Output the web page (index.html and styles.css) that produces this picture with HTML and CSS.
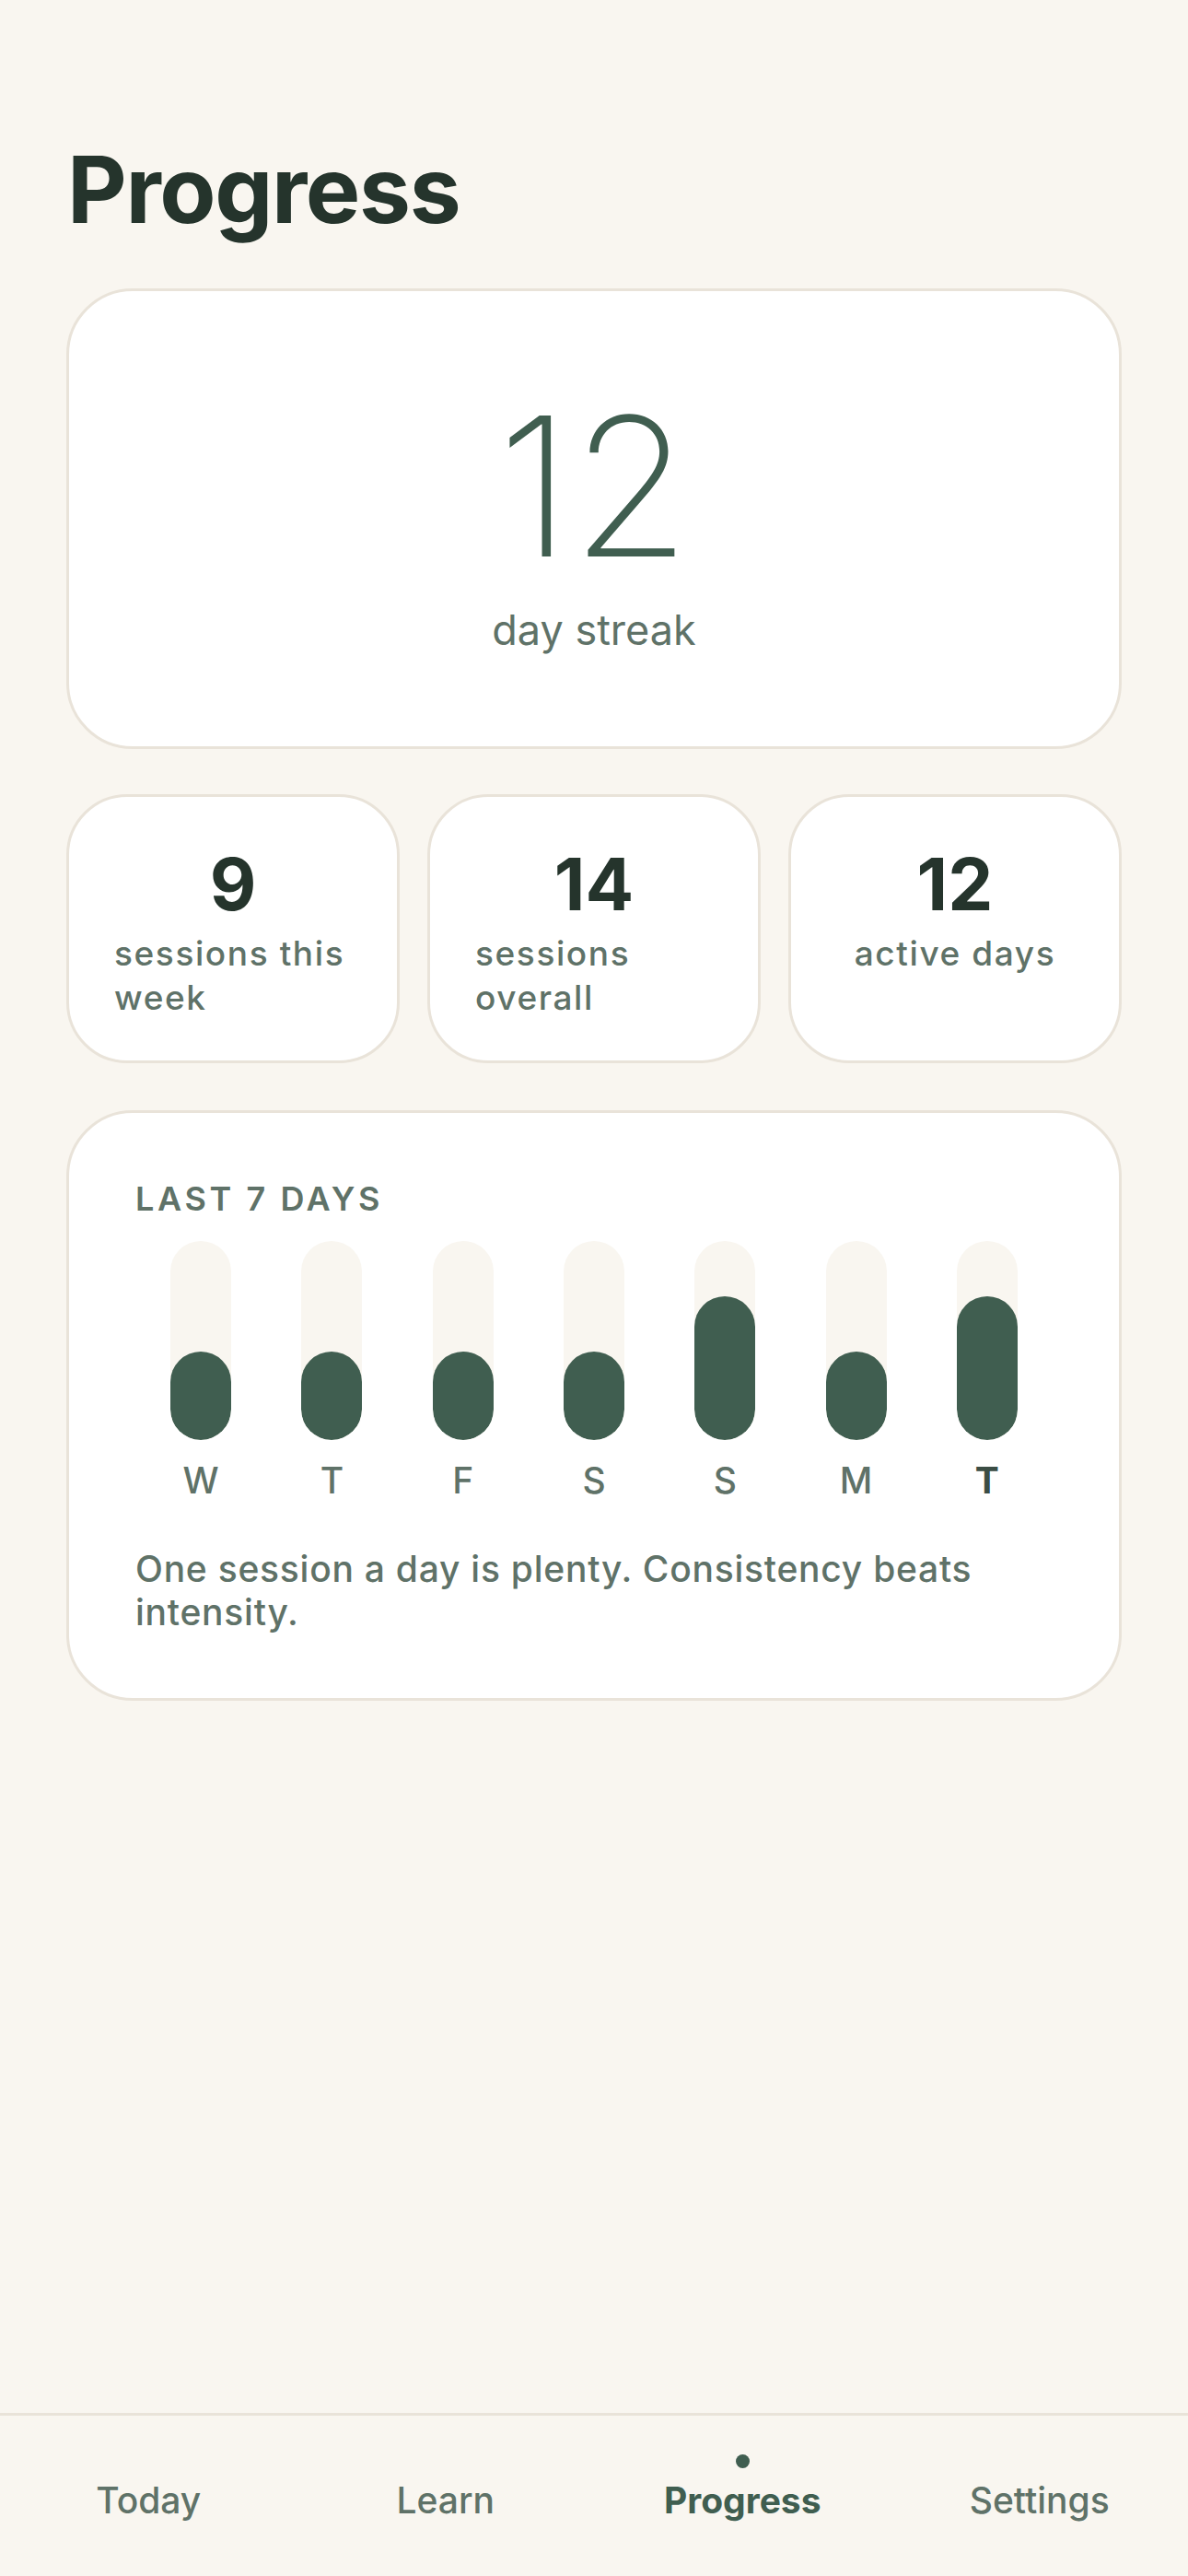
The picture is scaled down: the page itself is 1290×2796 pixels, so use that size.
FILE: index.html
```html
<!DOCTYPE html>
<html lang="en">
<head>
  <meta charset="UTF-8" />
  <meta name="viewport" content="width=device-width, initial-scale=1.0"/>
  <title>Progress</title>
  <link rel="stylesheet" href="styles.css">
</head>
<body>
  <div class="app">
    <main class="screen">
      <h1 class="title">Progress</h1>

      <section class="card streak">
        <div class="streak-num">12</div>
        <div class="streak-label">day streak</div>
      </section>

      <section class="stats">
        <div class="card stat">
          <div class="stat-num">9</div>
          <div class="stat-label">sessions this week</div>
        </div>
        <div class="card stat">
          <div class="stat-num">14</div>
          <div class="stat-label">sessions overall</div>
        </div>
        <div class="card stat">
          <div class="stat-num">12</div>
          <div class="stat-label">active days</div>
        </div>
      </section>

      <section class="card week">
        <div class="week-title">LAST 7 DAYS</div>
        <div class="bars">
          <div class="day">
            <div class="track"><div class="fill" style="height: 96px"></div></div>
            <span class="day-label">W</span>
          </div>
          <div class="day">
            <div class="track"><div class="fill" style="height: 96px"></div></div>
            <span class="day-label">T</span>
          </div>
          <div class="day">
            <div class="track"><div class="fill" style="height: 96px"></div></div>
            <span class="day-label">F</span>
          </div>
          <div class="day">
            <div class="track"><div class="fill" style="height: 96px"></div></div>
            <span class="day-label">S</span>
          </div>
          <div class="day">
            <div class="track"><div class="fill" style="height: 156px"></div></div>
            <span class="day-label">S</span>
          </div>
          <div class="day">
            <div class="track"><div class="fill" style="height: 96px"></div></div>
            <span class="day-label">M</span>
          </div>
          <div class="day today">
            <div class="track"><div class="fill" style="height: 156px"></div></div>
            <span class="day-label">T</span>
          </div>
        </div>
        <p class="week-note">One session a day is plenty. Consistency beats intensity.</p>
      </section>
    </main>

    <nav class="tabbar">
      <a class="tab"><span class="tab-dot"></span><span class="tab-label">Today</span></a>
      <a class="tab"><span class="tab-dot"></span><span class="tab-label">Learn</span></a>
      <a class="tab active"><span class="tab-dot"></span><span class="tab-label">Progress</span></a>
      <a class="tab"><span class="tab-dot"></span><span class="tab-label">Settings</span></a>
    </nav>
  </div>
</body>
</html>
```

FILE: styles.css
```css
* {
  box-sizing: border-box;
}

body {
  margin: 0;
  background: #f9f6f0;
  font-family: Inter, 'Noto Sans', 'Liberation Sans', sans-serif;
  color: #25342c;
}

.app {
  min-height: 100vh;
  display: flex;
  flex-direction: column;
}

.screen {
  flex: 1;
  padding: 146px 72px 0;
}

.title {
  margin: 0 0 47px;
  font-size: 100px;
  line-height: 120px;
  font-weight: 700;
  letter-spacing: -1.4px;
  padding-left: 1px;
}

.card {
  background: #fff;
  border: 3px solid #e9e3d9;
  border-radius: 72px;
}

/* streak */

.streak {
  height: 500px;
  display: flex;
  flex-direction: column;
  align-items: center;
  justify-content: center;
  padding-bottom: 14px;
}

.streak-num {
  font-size: 210px;
  line-height: 255px;
  font-weight: 200;
  color: #405e50;
}

.streak-label {
  font-size: 45px;
  line-height: 55px;
  color: #5f7268;
}

/* stats */

.stats {
  margin-top: 49px;
  display: grid;
  grid-template-columns: repeat(3, 1fr);
  gap: 30px;
}

.stat {
  border-radius: 66px;
  padding: 48px 49px 44px;
  display: flex;
  flex-direction: column;
  align-items: center;
  gap: 4px;
}

.stat-num {
  font-size: 78px;
  line-height: 94px;
  font-weight: 700;
}

.stat-label {
  width: fit-content;
  font-size: 37px;
  line-height: 48px;
  font-weight: 500;
  letter-spacing: 1.6px;
  color: #5f7268;
}

/* last 7 days */

.week {
  margin-top: 51px;
  padding: 72px 72px 70px;
}

.week-title {
  font-size: 36px;
  line-height: 43px;
  font-weight: 600;
  letter-spacing: 3.6px;
  color: #5f7268;
}

.bars {
  margin-top: 24px;
  display: grid;
  grid-template-columns: repeat(7, 1fr);
}

.day {
  display: flex;
  flex-direction: column;
  align-items: center;
  gap: 20px;
}

.track {
  width: 66px;
  height: 216px;
  border-radius: 33px;
  background: #f9f6f0;
  display: flex;
  flex-direction: column;
  justify-content: flex-end;
  overflow: hidden;
}

.fill {
  border-radius: 33px;
  background: #405e50;
}

.day-label {
  font-size: 39px;
  line-height: 47px;
  font-weight: 500;
  color: #5f7268;
}

.today .day-label {
  font-weight: 700;
  color: #3b4d44;
}

.week-note {
  margin: 49px 0 0;
  font-size: 39px;
  line-height: 47px;
  font-weight: 500;
  letter-spacing: 0.75px;
  color: #5f7268;
}

/* tab bar */

.tabbar {
  border-top: 3px solid #e9e3d9;
  display: grid;
  grid-template-columns: repeat(4, 1fr);
  padding: 42px 0 59px;
}

.tab {
  display: flex;
  flex-direction: column;
  align-items: center;
  gap: 11px;
}

.tab-dot {
  width: 15px;
  height: 15px;
  border-radius: 50%;
  background: #405e50;
  visibility: hidden;
}

.tab-label {
  font-size: 39px;
  line-height: 47px;
  font-weight: 500;
  color: #5f7268;
}

.tab.active .tab-dot {
  visibility: visible;
}

.tab.active .tab-label {
  font-weight: 700;
  color: #405e50;
}
```
